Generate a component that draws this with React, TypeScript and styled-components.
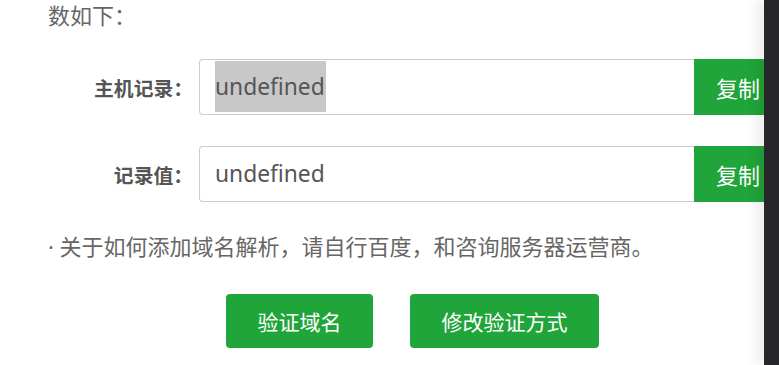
import React from "react";
import styled, { createGlobalStyle } from "styled-components";

const GlobalStyle = createGlobalStyle`
  html, body {
    margin: 0;
    padding: 0;
    background: #ffffff;
  }
  body {
    font-family: "Noto Sans", "Noto Sans CJK SC", sans-serif;
  }
  * { box-sizing: border-box; }
`;

const GREEN = "#20a53a";

const Page = styled.div`
  display: flex;
  width: 779px;
  height: 365px;
  overflow: hidden;
`;

const Content = styled.div`
  flex: 1;
  min-width: 0;
  overflow: hidden;
  padding-left: 48px;
  color: #666;
`;

const SidePanel = styled.div`
  width: 15px;
  flex: none;
  background: #27272a;
  box-shadow: -8px 0 12px rgba(0, 0, 0, 0.07);
  position: relative;
  z-index: 1;
`;

const Intro = styled.div`
  font-size: 22px;
  line-height: 30px;
  color: #666;
  white-space: nowrap;
`;

const FormRow = styled.div<{ $top: number }>`
  display: flex;
  align-items: center;
  margin-top: ${(p) => p.$top}px;
`;

const Label = styled.div`
  width: 151px;
  flex: none;
  padding-right: 6px;
  text-align: right;
  font-size: 19.8px;
  font-weight: 700;
  color: #555;
  white-space: nowrap;
`;

const InputGroup = styled.div`
  display: flex;
  flex: none;
  width: 590px;
  height: 56px;
`;

const Field = styled.div`
  width: 495px;
  height: 56px;
  border: 1px solid #cccccc;
  border-right: none;
  border-radius: 4px 0 0 4px;
  padding-left: 15px;
  display: flex;
  align-items: stretch;
  font-size: 22.8px;
  color: #555;
`;

const Value = styled.span<{ $selected?: boolean }>`
  display: inline-flex;
  align-items: center;
  margin: 1px 0 2px;
  background: ${(p) => (p.$selected ? "#c8c8c8" : "transparent")};
  padding-right: 1px;
`;

const CopyButton = styled.div`
  flex: 1;
  height: 56px;
  background: ${GREEN};
  color: #fff;
  font-size: 22px;
  display: flex;
  align-items: center;
  padding-left: 22px;
  white-space: nowrap;
`;

const Note = styled.div`
  margin-top: 29px;
  font-size: 22px;
  line-height: 30px;
  color: #666;
  white-space: nowrap;
`;

const Actions = styled.div`
  display: flex;
  gap: 37px;
  margin-top: 33px;
  padding-left: 178px;
`;

const ActionButton = styled.button<{ $width: number }>`
  width: ${(p) => p.$width}px;
  height: 54px;
  border: none;
  border-radius: 4px;
  background: ${GREEN};
  color: #fff;
  font-family: inherit;
  font-size: 21px;
  padding: 0;
  cursor: pointer;
`;

export default function App() {
  return (
    <>
      <GlobalStyle />
      <Page>
        <Content>
          <Intro>数如下：</Intro>
          <FormRow $top={29}>
            <Label>主机记录：</Label>
            <InputGroup>
              <Field>
                <Value $selected>undefined</Value>
              </Field>
              <CopyButton>复制</CopyButton>
            </InputGroup>
          </FormRow>
          <FormRow $top={31}>
            <Label>记录值：</Label>
            <InputGroup>
              <Field>
                <Value>undefined</Value>
              </Field>
              <CopyButton>复制</CopyButton>
            </InputGroup>
          </FormRow>
          <Note>· 关于如何添加域名解析，请自行百度，和咨询服务器运营商。</Note>
          <Actions>
            <ActionButton $width={147}>验证域名</ActionButton>
            <ActionButton $width={189}>修改验证方式</ActionButton>
          </Actions>
        </Content>
        <SidePanel />
      </Page>
    </>
  );
}
